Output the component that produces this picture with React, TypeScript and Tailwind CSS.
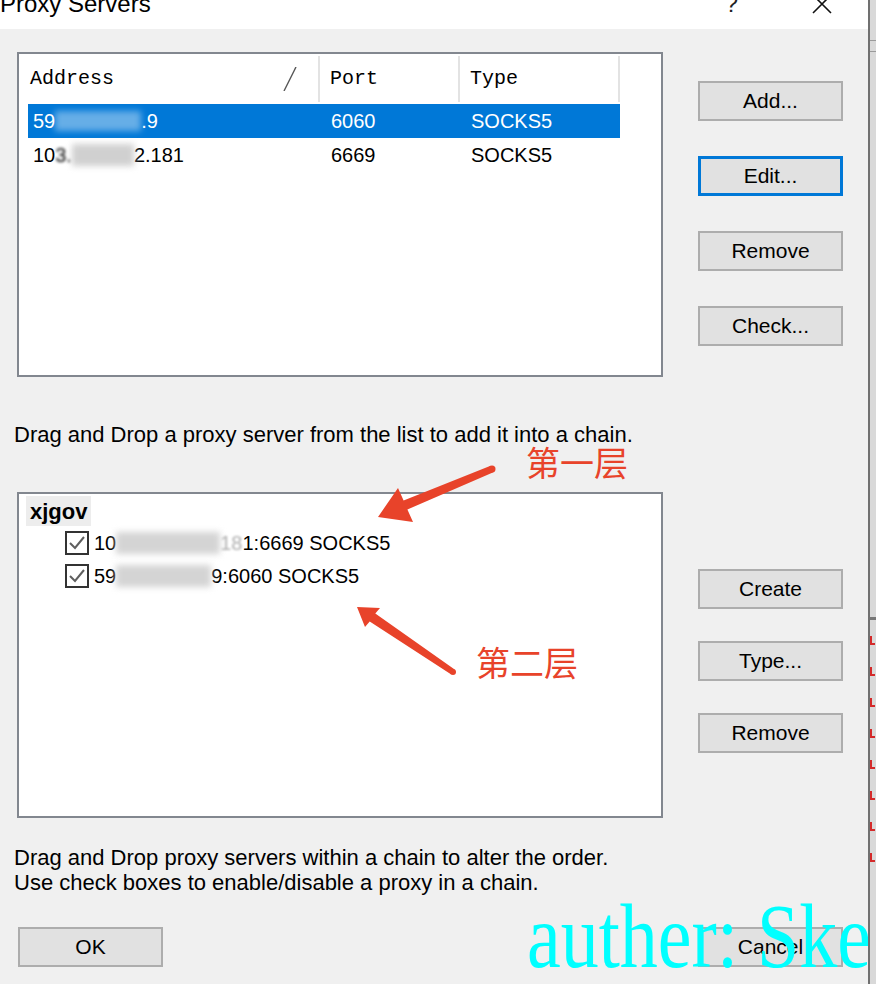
import React from "react";

export default function App() {
  return (
    <div className="flex h-[984px] w-[876px] overflow-hidden font-['Liberation_Sans',Arial,sans-serif] text-black">
      <Dialog />
      <EdgeStrip />
    </div>
  );
}

const Dialog = () => {
  return (
    <div className="relative flex w-[868px] shrink-0 flex-col overflow-hidden">
      <TitleBar />
      <div className="flex flex-1 flex-col bg-[#f0f0f0] pl-[17px]">
        <div className="flex items-start">
          <ServerList />
          <div className="ml-[35px] mt-[52px] flex flex-col gap-[35px]">
            <Button label="Add..." />
            <Button label="Edit..." focused />
            <Button label="Remove" />
            <Button label="Check..." />
          </div>
        </div>

        <p className="-ml-[3px] mt-[45px] text-[22px] leading-[26px]">
          Drag and Drop a proxy server from the list to add it into a chain.
        </p>

        <div className="mt-[44px] flex items-start">
          <ChainTree />
          <div className="ml-[35px] mt-[77px] flex flex-col gap-[32px]">
            <Button label="Create" />
            <Button label="Type..." />
            <Button label="Remove" />
          </div>
        </div>

        <div className="-ml-[3px] mt-[27px] text-[22px] leading-[25px]">
          <p>Drag and Drop proxy servers within a chain to alter the order.</p>
          <p>Use check boxes to enable/disable a proxy in a chain.</p>
        </div>

        <div className="mt-[32px] flex">
          <div className="w-[646px]">
            <div className="ml-[1px]">
              <Button label="OK" />
            </div>
          </div>
          <div className="ml-[35px]">
            <Button label="Cancel" />
          </div>
        </div>
      </div>

      <Annotations />
    </div>
  );
};

const TitleBar = () => {
  return (
    <div className="flex h-[29px] shrink-0 items-start bg-white">
      <span className="-mt-[8px] text-[24px] leading-[24px]">Proxy Servers</span>
      <span className="-mt-[8px] ml-auto text-[24px] leading-[24px] text-[#222]">?</span>
      <svg
        width="20"
        height="20"
        viewBox="0 0 20 20"
        className="-mt-[6px] ml-[74px] mr-[36px]"
      >
        <path d="M1 1 L19 19 M19 1 L1 19" stroke="#111" strokeWidth="1.6" fill="none" />
      </svg>
    </div>
  );
};

const Button = ({ label, focused }: { label: string; focused?: boolean }) => {
  if (focused) {
    return (
      <div className="flex h-[40px] w-[145px] items-center justify-center border-[3px] border-[#0078d7] bg-[#e1e1e1] text-[21px]">
        {label}
      </div>
    );
  }
  return (
    <div className="flex h-[40px] w-[145px] items-center justify-center border-2 border-[#adadad] bg-[#e1e1e1] text-[21px]">
      {label}
    </div>
  );
};

const ServerList = () => {
  return (
    <div className="mt-[23px] h-[325px] w-[646px] border-2 border-[#82878f] bg-white">
      <div className="flex h-[50px] font-['Liberation_Mono',monospace] text-[20px]">
        <div className="my-[2px] flex w-[301px] items-center border-r-2 border-[#e3e3e3] pl-[11px]">
          <span>Address</span>
          <svg width="14" height="24" viewBox="0 0 14 24" className="ml-auto mr-[21px]">
            <path d="M13 0 L1 24" stroke="#555" strokeWidth="1.4" />
          </svg>
        </div>
        <div className="my-[2px] flex w-[140px] items-center border-r-2 border-[#e3e3e3] pl-[10px]">
          Port
        </div>
        <div className="my-[2px] flex w-[160px] items-center border-r-2 border-[#e3e3e3] pl-[10px]">
          Type
        </div>
      </div>

      <div className="ml-[9px] flex h-[34px] w-[592px] items-center bg-[#0078d7] text-[20px] text-white">
        <div className="flex w-[292px] items-center pl-[5px]">
          <span>59</span>
          <span className="inline-block h-[20px] w-[86px] bg-white/40 blur-[3px]" />
          <span>.9</span>
        </div>
        <div className="w-[140px] pl-[11px]">6060</div>
        <div className="w-[160px] pl-[11px]">SOCKS5</div>
      </div>

      <div className="ml-[9px] flex h-[34px] w-[592px] items-center text-[20px]">
        <div className="flex w-[292px] items-center pl-[5px]">
          <span>10</span>
          <span className="blur-[1.5px]">3.</span>
          <span className="inline-block h-[22px] w-[62px] bg-[#d0d0d0] blur-[3px]" />
          <span>2.181</span>
        </div>
        <div className="w-[140px] pl-[11px]">6669</div>
        <div className="w-[160px] pl-[11px]">SOCKS5</div>
      </div>
    </div>
  );
};

const ChainTree = () => {
  return (
    <div className="h-[326px] w-[646px] border-2 border-[#82878f] bg-white pl-[7px] pt-[2px]">
      <div className="inline-flex h-[30px] items-center bg-[#ededed] px-[4px] text-[22px] font-bold">
        xjgov
      </div>
      <div className="pl-[39px] text-[20px]">
        <ChainRow>
          <span>10</span>
          <span className="inline-block h-[22px] w-[104px] bg-[#d4d4d4] blur-[3px]" />
          <span className="text-[#b0b0b0] blur-[1px]">18</span>
          <span>1:6669 SOCKS5</span>
        </ChainRow>
        <ChainRow>
          <span>59</span>
          <span className="inline-block h-[22px] w-[95px] bg-[#d4d4d4] blur-[3px]" />
          <span>9:6060 SOCKS5</span>
        </ChainRow>
      </div>
    </div>
  );
};

const ChainRow = ({ children }: { children: React.ReactNode }) => {
  return (
    <div className="flex h-[33px] items-center">
      <div className="flex h-[24px] w-[24px] items-center justify-center border-2 border-[#333]">
        <svg width="18" height="18" viewBox="0 0 18 18">
          <path d="M2 9 L7 14 L16 3" stroke="#5f5f5f" strokeWidth="2" fill="none" />
        </svg>
      </div>
      <div className="ml-[5px] flex items-center">{children}</div>
    </div>
  );
};

// red markup drawn on top of the screenshot
const Annotations = () => {
  return (
    <>
      <svg
        width="868"
        height="984"
        viewBox="0 0 868 984"
        className="pointer-events-none absolute left-0 top-0"
      >
        <polygon
          points="378,517 398,488 403.6,500.4 490.6,465.8 493.4,472.2 407.4,509.6 413,522"
          fill="#e8432a"
        />
        <circle cx="492" cy="469" r="3.5" fill="#e8432a" />
        <polygon
          points="357,607 380,608 375.3,613.4 454.7,669.5 451.3,674.5 369.7,621.6 365,627"
          fill="#e8432a"
        />
        <circle cx="453" cy="672" r="3" fill="#e8432a" />
      </svg>
      <span className="absolute left-[526px] top-[445px] font-['Noto_Sans_CJK_SC',sans-serif] text-[34px] leading-none text-[#e8432a]">
        第一层
      </span>
      <span className="absolute left-[476px] top-[645px] font-['Noto_Sans_CJK_SC',sans-serif] text-[34px] leading-none text-[#e8432a]">
        第二层
      </span>
      <span className="absolute left-[527px] top-[905px] origin-bottom scale-y-[1.2] whitespace-nowrap font-['Liberation_Serif',serif] text-[76px] leading-none text-[#00ffff]">
        auther: Ske
      </span>
    </>
  );
};

const EdgeStrip = () => {
  return (
    <div className="flex w-[8px] shrink-0 flex-col border-l-2 border-[#707070] bg-[#d9d9d9]">
      <div className="mt-[40px] h-[12px] border-y border-[#9a9a9a]" />
      <div className="mt-[565px] h-[3px] bg-[#777]" />
      <div className="mt-[16px] flex flex-col gap-[22px]">
        <span className="h-[9px] w-[5px] border-b-2 border-l-2 border-[#d42a2a]" />
        <span className="h-[9px] w-[5px] border-b-2 border-l-2 border-[#d42a2a]" />
        <span className="h-[9px] w-[5px] border-b-2 border-l-2 border-[#d42a2a]" />
        <span className="h-[9px] w-[5px] border-b-2 border-l-2 border-[#d42a2a]" />
        <span className="h-[9px] w-[5px] border-b-2 border-l-2 border-[#d42a2a]" />
        <span className="h-[9px] w-[5px] border-b-2 border-l-2 border-[#d42a2a]" />
        <span className="h-[9px] w-[5px] border-b-2 border-l-2 border-[#d42a2a]" />
        <span className="h-[9px] w-[5px] border-b-2 border-l-2 border-[#d42a2a]" />
      </div>
    </div>
  );
};
